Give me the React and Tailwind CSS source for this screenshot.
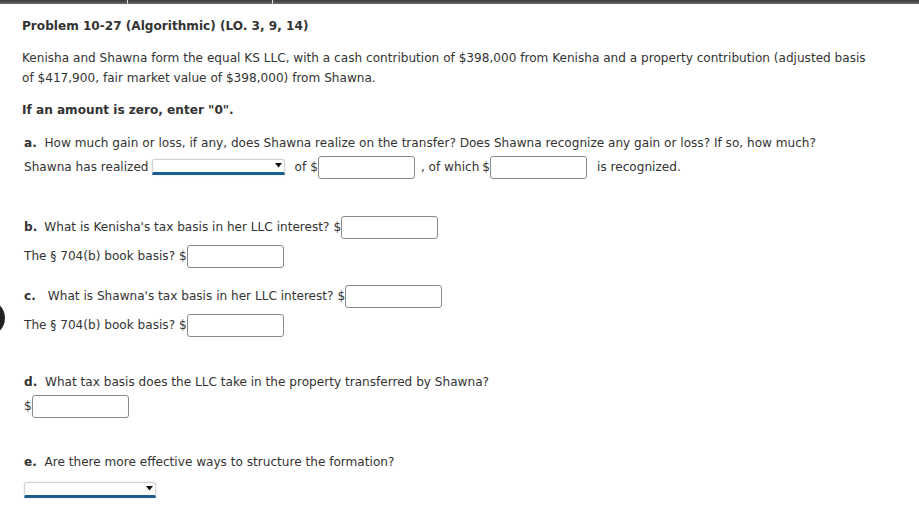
import React from "react";

// Numeric answer box with a dollar sign in front
const Money = ({ w = "w-[97px]" }) => (
  <span className="inline-flex items-center">
    <span>$</span>
    <span className={`inline-block h-[23px] ${w} bg-white border border-[#8a8a8a] rounded-[3px]`} />
  </span>
);

// Dropdown placeholder: light frame, thick blue underline, small arrow
const Select = ({ w = "w-[133px]" }) => (
  <span className={`relative inline-block h-[16px] ${w} bg-white rounded-t-[3px] border-x border-t border-[#d2d2d2] border-b-[3px] border-b-[#1d5f8c] shadow-[0_0_2px_rgba(0,0,0,0.15)]`}>
    <svg className="absolute right-[2px] top-[3px]" width="7" height="5" viewBox="0 0 7 5">
      <path d="M0 0 L7 0 L3.5 4.5 Z" fill="#111" />
    </svg>
  </span>
);

const Label = ({ children }) => <span className="font-bold">{children}</span>;

export default function App() {
  return (
    <div className="relative w-[919px] h-[516px] bg-white overflow-hidden text-[#333] text-[12.1px] leading-[20px] font-['DejaVu_Sans',Verdana,sans-serif]">
      {/* top strip */}
      <div className="flex h-[4px] bg-gradient-to-b from-[#3a3a3a] to-[#6a6a6a]">
        <div className="w-[128px] border-r border-[#ddd]" />
        <div className="w-[145px] border-r border-[#ddd]" />
      </div>

      {/* half circle peeking from the left edge */}
      <div className="absolute left-[-31px] top-[300px] w-[36px] h-[36px] rounded-full bg-[#222]" />

      <div className="px-[22px]">
        <div className="mt-[12px] font-bold">Problem 10-27 (Algorithmic) (LO. 3, 9, 14)</div>

        <p className="mt-[12px] max-w-[852px]">
          Kenisha and Shawna form the equal KS LLC, with a cash contribution of $398,000 from Kenisha and a property contribution (adjusted basis of $417,900, fair market value of $398,000) from Shawna.
        </p>

        <div className="mt-[12px] font-bold">If an amount is zero, enter "0".</div>

        <div className="pl-[2px]">
          <div className="mt-[13px]">
            <Label>a.</Label>&nbsp; How much gain or loss, if any, does Shawna realize on the transfer? Does Shawna recognize any gain or loss? If so, how much?
          </div>
          <div className="mt-[2px] flex items-center h-[24px] whitespace-nowrap">
            <span className="mr-[3px]">Shawna has realized</span>
            <Select />
            <span className="ml-[10px] mr-[4px]">of</span>
            <Money />
            <span className="ml-[6px] mr-[3px]">, of which</span>
            <Money />
            <span className="ml-[10px]">is recognized.</span>
          </div>

          <div className="mt-[36px] flex items-center h-[24px] whitespace-nowrap">
            <Label>b.</Label>
            <span className="ml-[7px] mr-[4px]">What is Kenisha's tax basis in her LLC interest?</span>
            <Money />
          </div>
          <div className="mt-[5px] flex items-center h-[24px] whitespace-nowrap">
            <span className="mr-[4px]">The § 704(b) book basis?</span>
            <Money />
          </div>

          <div className="mt-[16px] flex items-center h-[24px] whitespace-nowrap">
            <Label>c.</Label>
            <span className="ml-[12px] mr-[4px]">What is Shawna's tax basis in her LLC interest?</span>
            <Money />
          </div>
          <div className="mt-[5px] flex items-center h-[24px] whitespace-nowrap">
            <span className="mr-[4px]">The § 704(b) book basis?</span>
            <Money />
          </div>

          <div className="mt-[35px]">
            <Label>d.</Label>&nbsp; What tax basis does the LLC take in the property transferred by Shawna?
          </div>
          <div className="mt-[2px] flex items-center h-[24px]">
            <Money />
          </div>

          <div className="mt-[34px]">
            <Label>e.</Label>&nbsp; Are there more effective ways to structure the formation?
          </div>
          <div className="mt-[10px] flex">
            <Select w="w-[132px]" />
          </div>
        </div>
      </div>
    </div>
  );
}
